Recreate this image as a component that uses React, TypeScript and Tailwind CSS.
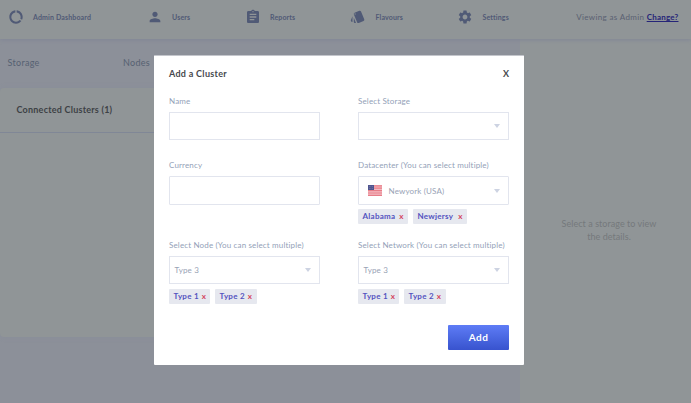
import React from "react";
import { MdDataUsage, MdPerson, MdAssignment, MdStyle, MdSettings } from "react-icons/md";

const Nav = ({ icon, label, className, gap }: { icon: React.ReactNode; label: string; className: string; gap: string }) => (
  <div className={`flex shrink-0 items-center ${className} ${gap}`}>
    {icon}
    <span className="text-[7px] font-bold leading-[10px] tracking-[0.14px]">{label}</span>
  </div>
);

const Label = ({ text, className = "" }: { text: string; className?: string }) => (
  <div className={`h-[12px] whitespace-nowrap text-[8px] leading-[12px] tracking-[0.15px] text-[#939fb8] ${className}`}>{text}</div>
);

const Box = ({ children, arrow, className }: { children?: React.ReactNode; arrow?: boolean; className: string }) => (
  <div className={`flex w-[151px] items-center border border-[#e2e5ee] text-[8px] leading-[12px] tracking-[0.15px] text-[#98a2b5] ${className}`}>
    {children}
    {arrow && (
      <svg viewBox="0 0 6 4" className="mr-[8.5px] ml-auto h-[4px] w-[6px] fill-[#cdd3e2]">
        <path d="M0 0h6L3 4z" />
      </svg>
    )}
  </div>
);

const Tag = ({ text, width, gap }: { text: string; width: string; gap: string }) => (
  <div className={`flex h-[15px] items-center rounded-[1px] bg-[#e6e8ef] pl-[4.5px] text-[8px] font-bold leading-[15px] ${width} ${gap}`}>
    <span className="tracking-[0.26px] text-[#5353c0]">{text}</span>
    <span className="text-[8px] text-[#d3405c]">x</span>
  </div>
);

const Flag = () => (
  <svg viewBox="0 0 14 11" className="mr-[6.5px] ml-[9px] h-[11px] w-[14px]">
    <rect width="14" height="11" rx="0.5" fill="#f4bcc3" />
    <path d="M0 .8h14M0 3.2h14M0 5.6h14M0 8h14M0 10.4h14" stroke="#e77d88" strokeWidth="1.2" />
    <rect width="6" height="5" fill="#50558f" />
    <path d="M1 1.5h4M1 3.5h4" stroke="#8d91b8" strokeWidth=".6" strokeDasharray=".7 .8" />
  </svg>
);

export default function App() {
  return (
    <div className="relative flex h-[403px] w-[691px] flex-col overflow-hidden bg-[#8c9099] font-['Lato',sans-serif]">
      <header className="z-10 flex h-[39px] shrink-0 items-center bg-[#909597] pb-[5px] text-[#505a76] shadow-[0_1px_4px_#818696]">
        <Nav className="w-[139px] pl-[7.5px]" gap="gap-[9.5px]" label="Admin Dashboard" icon={<MdDataUsage size={16} />} />
        <Nav className="w-[98px] pl-[7.5px]" gap="gap-[9.5px]" label="Users" icon={<MdPerson size={16} />} />
        <Nav className="w-[105px] pl-[7.5px]" gap="gap-[9.5px]" label="Reports" icon={<MdAssignment size={16} />} />
        <Nav className="w-[109px] pl-[8px]" gap="gap-[10px]" label="Flavours" icon={<MdStyle size={15.5} />} />
        <Nav className="pl-[6px]" gap="gap-[9.5px]" label="Settings" icon={<MdSettings size={16} />} />
        <div className="mr-[12.5px] ml-auto whitespace-nowrap text-[8px] leading-[12px] text-[#5a6172]">
          <span className="tracking-[0.35px]">Viewing as Admin </span>
          <span className="font-bold tracking-[0.22px] text-[#252478] underline">Change?</span>
        </div>
      </header>
      <div className="flex flex-1">
        <main className="w-[520px]">
          <div className="flex h-[49px] pt-[17px] pl-[7.5px] text-[9px] leading-[14px] text-[#566172]">
            <span className="w-[115.5px] tracking-[0.3px]">Storage</span>
            <span className="tracking-[0.3px]">Nodes</span>
          </div>
          <section className="h-[249px] rounded-[4px] bg-[#909597] shadow-[0_0_5px_#898e99]">
            <h2 className="h-[45px] border-b border-[#808796] pt-[15px] pl-[16.5px] text-[9px] font-bold leading-[14px] tracking-[0.23px] text-[#3d4145]">Connected Clusters (1)</h2>
          </section>
        </main>
        <aside className="flex-1 bg-[#909597] pt-[178px] pl-[7px] text-center text-[9px] leading-[13px] tracking-[0.05px] text-[#75797c]">
          Select a storage to view<br />the details.
        </aside>
      </div>

      <div role="dialog" className="absolute top-[55px] left-[154px] z-20 h-[310px] w-[370px] rounded-[1px] border-t border-[#c4c6cc] bg-white px-[15px]">
        <div className="flex h-[39px] justify-between pt-[11px] text-[9px] font-bold leading-[14px] text-[#46484d]">
          <h1 className="tracking-[0.3px]">Add a Cluster</h1>
          <span>X</span>
        </div>
        <div className="flex gap-[38px]">
          <div className="w-[151px]">
            <Label text="Name" />
            <Box className="mt-[5px] h-[28px]" />
            <Label text="Currency" className="mt-[19px]" />
            <Box className="mt-[5px] h-[29px] rounded-[1px]" />
            <Label text="Select Node (You can select multiple)" className="mt-[34px]" />
            <Box className="mt-[5px] h-[28px] pl-[4.5px]" arrow>Type 3</Box>
            <div className="mt-[5px] flex gap-[5px]">
              <Tag text="Type 1" width="w-[41px]" gap="gap-[3px]" />
              <Tag text="Type 2" width="w-[42px]" gap="gap-[3px]" />
            </div>
          </div>
          <div className="w-[151px]">
            <Label text="Select Storage" />
            <Box className="mt-[5px] h-[28px]" arrow />
            <Label text="Datacenter (You can select multiple)" className="mt-[19px]" />
            <Box className="mt-[5px] h-[29px] rounded-[1px]" arrow><Flag />Newyork (USA)</Box>
            <div className="mt-[4px] flex h-[30px] gap-[5px]">
              <Tag text="Alabama" width="w-[50px]" gap="gap-[4px]" />
              <Tag text="Newjersy" width="w-[54px]" gap="gap-[5px]" />
            </div>
            <Label text="Select Network (You can select multiple)" />
            <Box className="mt-[5px] h-[28px] pl-[4.5px]" arrow>Type 3</Box>
            <div className="mt-[5px] flex gap-[5px]">
              <Tag text="Type 1" width="w-[41px]" gap="gap-[3px]" />
              <Tag text="Type 2" width="w-[42px]" gap="gap-[3px]" />
            </div>
          </div>
        </div>
        <button className="mt-[21px] ml-auto block h-[25px] w-[61px] rounded-[1px] bg-linear-to-b from-[#5e7cf6] to-[#3853ce] text-[10px] font-bold leading-[25px] tracking-[0.5px] text-white">Add</button>
      </div>
    </div>
  );
}
